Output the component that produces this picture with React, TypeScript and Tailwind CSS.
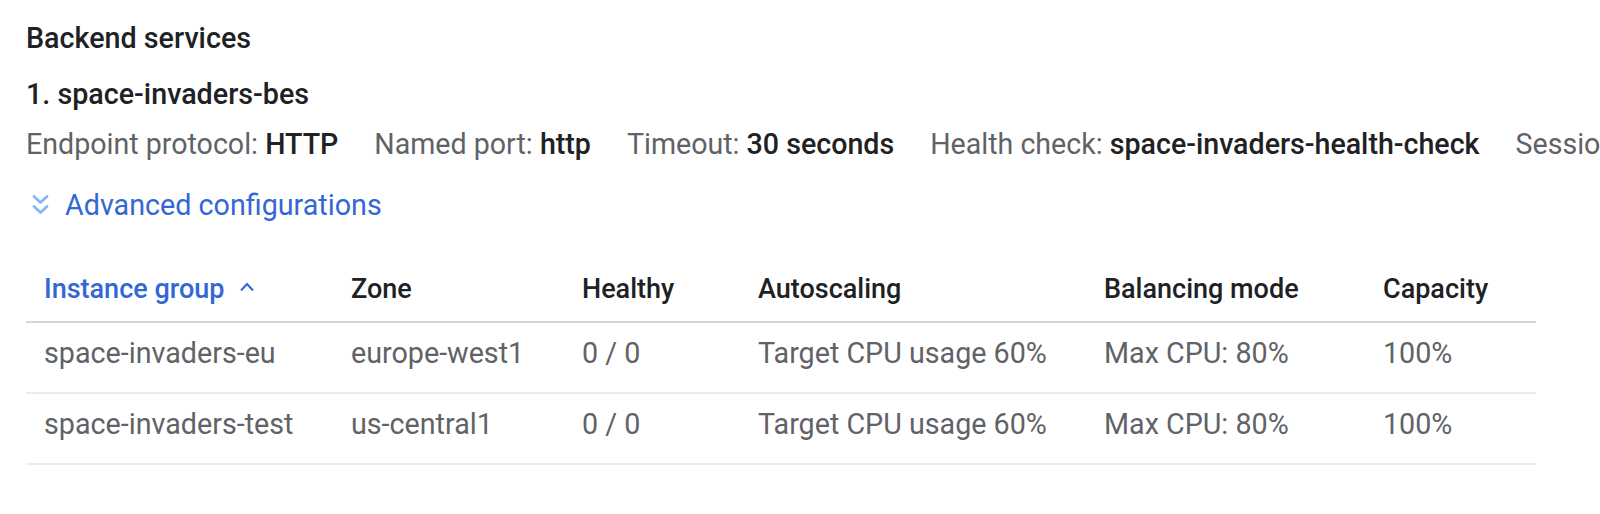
import React from "react";

const rows = [
  ["space-invaders-eu", "europe-west1", "0 / 0", "Target CPU usage 60%", "Max CPU: 80%", "100%"],
  ["space-invaders-test", "us-central1", "0 / 0", "Target CPU usage 60%", "Max CPU: 80%", "100%"],
];

const cols = ["w-[307px]", "w-[231px]", "w-[176px]", "w-[346px]", "w-[279px]", "flex-1"];

function Meta({ label, value }: { label: string; value: string }) {
  return (
    <span className="mr-[36px] shrink-0">
      <span className="text-[#5f6368]">{label} </span>
      <span className="font-medium text-[#202124]">{value}</span>
    </span>
  );
}

export default function App() {
  return (
    <div
      className="w-[1600px] h-[514px] bg-white overflow-hidden pl-[26px]"
      style={{ fontFamily: "Roboto, 'Liberation Sans', sans-serif" }}
    >
      <div className="pt-[20px] text-[28.7px] font-medium text-[#202124] leading-[36px]">Backend services</div>
      <div className="mt-[20px] text-[28.7px] font-medium text-[#202124] leading-[36px]">1. space-invaders-bes</div>
      <div className="mt-[14px] flex whitespace-nowrap text-[28.6px] leading-[36px]">
        <Meta label="Endpoint protocol:" value="HTTP" />
        <Meta label="Named port:" value="http" />
        <Meta label="Timeout:" value="30 seconds" />
        <Meta label="Health check:" value="space-invaders-health-check" />
        <Meta label="Session affinity:" value="None" />
      </div>
      <div className="mt-[25px] flex items-center text-[28.7px] leading-[36px] text-[#3367d6]">
        <svg width="17" height="22" viewBox="0 0 17 22" className="ml-[6px] mr-[16px]" fill="none" stroke="#8ab4f8" strokeWidth="2.8" strokeLinecap="round" strokeLinejoin="round">
          <path d="M2 2.5 L8.5 8.5 L15 2.5" />
          <path d="M2 12.5 L8.5 18.5 L15 12.5" />
        </svg>
        <span>Advanced configurations</span>
      </div>
      <div className="mt-[34px] w-[1510px] leading-[36px]">
        <div className="flex items-center h-[66px] border-b-2 border-[#d6d6d6] pl-[18px] text-[27px] font-medium text-[#202124]">
          <div className={`${cols[0]} flex items-center text-[#3367d6]`}>
            <span>Instance group</span>
            <svg width="16" height="10" viewBox="0 0 16 10" className="ml-[15px] mb-[4px]" fill="none" stroke="#3367d6" strokeWidth="2">
              <path d="M2 8.5 L8 2 L14 8.5" />
            </svg>
          </div>
          {["Zone", "Healthy", "Autoscaling", "Balancing mode", "Capacity"].map((h, i) => (
            <div key={h} className={cols[i + 1]}>{h}</div>
          ))}
        </div>
        {rows.map((r, ri) => (
          <div key={ri} className="flex items-center h-[71px] border-b-2 border-[#ebebeb] pl-[18px] pb-[9px] text-[28.7px] text-[#5f6368]">
            {r.map((c, ci) => (
              <div key={ci} className={cols[ci]}>{c}</div>
            ))}
          </div>
        ))}
      </div>
    </div>
  );
}
